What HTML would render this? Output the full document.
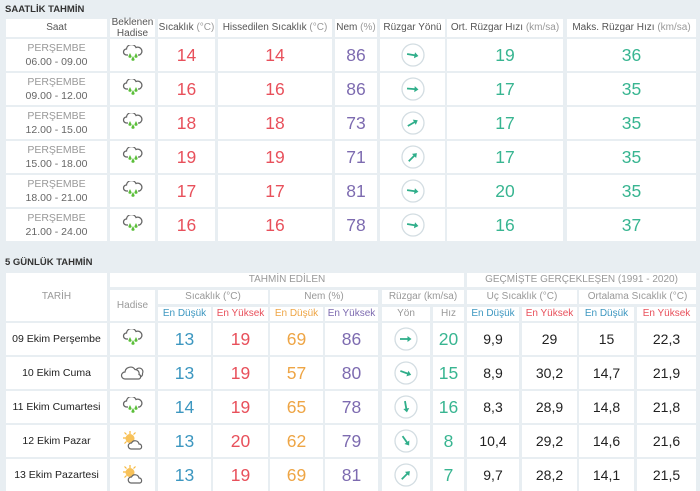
<!DOCTYPE html>
<html><head><meta charset="utf-8"><style>
body{margin:0;width:700px;height:485px;background:#e8eef2;font-family:"Liberation Sans",sans-serif;position:relative;overflow:hidden}
.c{position:absolute;background:#fff;display:flex;align-items:center;justify-content:center;text-align:center;color:#666;font-size:10px;line-height:12px;white-space:nowrap}
.t{position:absolute;font-size:9.5px;font-weight:bold;color:#333;left:5px}
.h{color:#555;font-size:10px}.u{color:#999}
.n{font-size:17.5px}
.r{color:#e8505b}.p{color:#7d6bb0}.g{color:#38b591}.b{color:#3d97c0}.o{color:#eea545}.k{color:#222;font-size:14px}
.s{font-size:10.5px;line-height:14px;color:#666}.s span{color:#999}
.d{font-size:10.5px;color:#222}
</style></head><body>
<div class="t" style="top:4px">SAATLİK TAHMİN</div>
<div class="c h" style="left:6px;top:19px;width:101px;height:18px">Saat</div>
<div class="c h" style="left:110px;top:19px;width:45px;height:18px;line-height:11px">Beklenen<br>Hadise</div>
<div class="c h" style="left:158px;top:19px;width:57px;height:18px">Sıcaklık&nbsp;<span class="u">(°C)</span></div>
<div class="c h" style="left:218px;top:19px;width:114px;height:18px">Hissedilen Sıcaklık&nbsp;<span class="u">(°C)</span></div>
<div class="c h" style="left:335px;top:19px;width:42px;height:18px">Nem&nbsp;<span class="u">(%)</span></div>
<div class="c h" style="left:380px;top:19px;width:65px;height:18px">Rüzgar Yönü</div>
<div class="c h" style="left:447px;top:19px;width:116px;height:18px">Ort. Rüzgar Hızı&nbsp;<span class="u">(km/sa)</span></div>
<div class="c h" style="left:567px;top:19px;width:129px;height:18px">Maks. Rüzgar Hızı&nbsp;<span class="u">(km/sa)</span></div>

<!-- top rows -->
<div class="c s" style="left:6px;top:39px;width:101px;height:32px"><div><span>PERŞEMBE</span><br>06.00 - 09.00</div></div>
<div class="c" style="left:110px;top:39px;width:45px;height:32px"><svg width="24" height="20" viewBox="0 0 24 20"><path d="M7 10H5.5a3 3 0 0 1 0-6A5 5 0 0 1 15 2.5a3.8 3.8 0 0 1 3.5 7.5H17" fill="none" stroke="#666" stroke-width="1.3"/><path d="M9 8l-1.6 3.2a1.6 1.6 0 0 0 3.2 0zM12 11l-1.6 3.2a1.6 1.6 0 0 0 3.2 0zM15 8l-1.6 3.2a1.6 1.6 0 0 0 3.2 0z" fill="#5bbf3a"/></svg></div>
<div class="c n r" style="left:158px;top:39px;width:57px;height:32px">14</div>
<div class="c n r" style="left:218px;top:39px;width:114px;height:32px">14</div>
<div class="c n p" style="left:335px;top:39px;width:42px;height:32px">86</div>
<div class="c" style="left:380px;top:39px;width:65px;height:32px"><svg width="24" height="24"><circle cx="12" cy="12" r="11" fill="none" stroke="#d3dde2" stroke-width="1.3"/><g transform="rotate(10 12 12)"><path d="M6 12h9" stroke="#2fae8a" stroke-width="1.8"/><path d="M17.5 12l-4-3v6z" fill="#2fae8a"/></g></svg></div>
<div class="c n g" style="left:447px;top:39px;width:116px;height:32px">19</div>
<div class="c n g" style="left:567px;top:39px;width:129px;height:32px">36</div>

<div class="c s" style="left:6px;top:73px;width:101px;height:32px"><div><span>PERŞEMBE</span><br>09.00 - 12.00</div></div>
<div class="c" style="left:110px;top:73px;width:45px;height:32px"><svg width="24" height="20" viewBox="0 0 24 20"><path d="M7 10H5.5a3 3 0 0 1 0-6A5 5 0 0 1 15 2.5a3.8 3.8 0 0 1 3.5 7.5H17" fill="none" stroke="#666" stroke-width="1.3"/><path d="M9 8l-1.6 3.2a1.6 1.6 0 0 0 3.2 0zM12 11l-1.6 3.2a1.6 1.6 0 0 0 3.2 0zM15 8l-1.6 3.2a1.6 1.6 0 0 0 3.2 0z" fill="#5bbf3a"/></svg></div>
<div class="c n r" style="left:158px;top:73px;width:57px;height:32px">16</div>
<div class="c n r" style="left:218px;top:73px;width:114px;height:32px">16</div>
<div class="c n p" style="left:335px;top:73px;width:42px;height:32px">86</div>
<div class="c" style="left:380px;top:73px;width:65px;height:32px"><svg width="24" height="24"><circle cx="12" cy="12" r="11" fill="none" stroke="#d3dde2" stroke-width="1.3"/><g transform="rotate(5 12 12)"><path d="M6 12h9" stroke="#2fae8a" stroke-width="1.8"/><path d="M17.5 12l-4-3v6z" fill="#2fae8a"/></g></svg></div>
<div class="c n g" style="left:447px;top:73px;width:116px;height:32px">17</div>
<div class="c n g" style="left:567px;top:73px;width:129px;height:32px">35</div>

<div class="c s" style="left:6px;top:107px;width:101px;height:32px"><div><span>PERŞEMBE</span><br>12.00 - 15.00</div></div>
<div class="c" style="left:110px;top:107px;width:45px;height:32px"><svg width="24" height="20" viewBox="0 0 24 20"><path d="M7 10H5.5a3 3 0 0 1 0-6A5 5 0 0 1 15 2.5a3.8 3.8 0 0 1 3.5 7.5H17" fill="none" stroke="#666" stroke-width="1.3"/><path d="M9 8l-1.6 3.2a1.6 1.6 0 0 0 3.2 0zM12 11l-1.6 3.2a1.6 1.6 0 0 0 3.2 0zM15 8l-1.6 3.2a1.6 1.6 0 0 0 3.2 0z" fill="#5bbf3a"/></svg></div>
<div class="c n r" style="left:158px;top:107px;width:57px;height:32px">18</div>
<div class="c n r" style="left:218px;top:107px;width:114px;height:32px">18</div>
<div class="c n p" style="left:335px;top:107px;width:42px;height:32px">73</div>
<div class="c" style="left:380px;top:107px;width:65px;height:32px"><svg width="24" height="24"><circle cx="12" cy="12" r="11" fill="none" stroke="#d3dde2" stroke-width="1.3"/><g transform="rotate(-30 12 12)"><path d="M6 12h9" stroke="#2fae8a" stroke-width="1.8"/><path d="M17.5 12l-4-3v6z" fill="#2fae8a"/></g></svg></div>
<div class="c n g" style="left:447px;top:107px;width:116px;height:32px">17</div>
<div class="c n g" style="left:567px;top:107px;width:129px;height:32px">35</div>

<div class="c s" style="left:6px;top:141px;width:101px;height:32px"><div><span>PERŞEMBE</span><br>15.00 - 18.00</div></div>
<div class="c" style="left:110px;top:141px;width:45px;height:32px"><svg width="24" height="20" viewBox="0 0 24 20"><path d="M7 10H5.5a3 3 0 0 1 0-6A5 5 0 0 1 15 2.5a3.8 3.8 0 0 1 3.5 7.5H17" fill="none" stroke="#666" stroke-width="1.3"/><path d="M9 8l-1.6 3.2a1.6 1.6 0 0 0 3.2 0zM12 11l-1.6 3.2a1.6 1.6 0 0 0 3.2 0zM15 8l-1.6 3.2a1.6 1.6 0 0 0 3.2 0z" fill="#5bbf3a"/></svg></div>
<div class="c n r" style="left:158px;top:141px;width:57px;height:32px">19</div>
<div class="c n r" style="left:218px;top:141px;width:114px;height:32px">19</div>
<div class="c n p" style="left:335px;top:141px;width:42px;height:32px">71</div>
<div class="c" style="left:380px;top:141px;width:65px;height:32px"><svg width="24" height="24"><circle cx="12" cy="12" r="11" fill="none" stroke="#d3dde2" stroke-width="1.3"/><g transform="rotate(-45 12 12)"><path d="M6 12h9" stroke="#2fae8a" stroke-width="1.8"/><path d="M17.5 12l-4-3v6z" fill="#2fae8a"/></g></svg></div>
<div class="c n g" style="left:447px;top:141px;width:116px;height:32px">17</div>
<div class="c n g" style="left:567px;top:141px;width:129px;height:32px">35</div>

<div class="c s" style="left:6px;top:175px;width:101px;height:32px"><div><span>PERŞEMBE</span><br>18.00 - 21.00</div></div>
<div class="c" style="left:110px;top:175px;width:45px;height:32px"><svg width="24" height="20" viewBox="0 0 24 20"><path d="M7 10H5.5a3 3 0 0 1 0-6A5 5 0 0 1 15 2.5a3.8 3.8 0 0 1 3.5 7.5H17" fill="none" stroke="#666" stroke-width="1.3"/><path d="M9 8l-1.6 3.2a1.6 1.6 0 0 0 3.2 0zM12 11l-1.6 3.2a1.6 1.6 0 0 0 3.2 0zM15 8l-1.6 3.2a1.6 1.6 0 0 0 3.2 0z" fill="#5bbf3a"/></svg></div>
<div class="c n r" style="left:158px;top:175px;width:57px;height:32px">17</div>
<div class="c n r" style="left:218px;top:175px;width:114px;height:32px">17</div>
<div class="c n p" style="left:335px;top:175px;width:42px;height:32px">81</div>
<div class="c" style="left:380px;top:175px;width:65px;height:32px"><svg width="24" height="24"><circle cx="12" cy="12" r="11" fill="none" stroke="#d3dde2" stroke-width="1.3"/><g transform="rotate(8 12 12)"><path d="M6 12h9" stroke="#2fae8a" stroke-width="1.8"/><path d="M17.5 12l-4-3v6z" fill="#2fae8a"/></g></svg></div>
<div class="c n g" style="left:447px;top:175px;width:116px;height:32px">20</div>
<div class="c n g" style="left:567px;top:175px;width:129px;height:32px">35</div>

<div class="c s" style="left:6px;top:209px;width:101px;height:32px"><div><span>PERŞEMBE</span><br>21.00 - 24.00</div></div>
<div class="c" style="left:110px;top:209px;width:45px;height:32px"><svg width="24" height="20" viewBox="0 0 24 20"><path d="M7 10H5.5a3 3 0 0 1 0-6A5 5 0 0 1 15 2.5a3.8 3.8 0 0 1 3.5 7.5H17" fill="none" stroke="#666" stroke-width="1.3"/><path d="M9 8l-1.6 3.2a1.6 1.6 0 0 0 3.2 0zM12 11l-1.6 3.2a1.6 1.6 0 0 0 3.2 0zM15 8l-1.6 3.2a1.6 1.6 0 0 0 3.2 0z" fill="#5bbf3a"/></svg></div>
<div class="c n r" style="left:158px;top:209px;width:57px;height:32px">16</div>
<div class="c n r" style="left:218px;top:209px;width:114px;height:32px">16</div>
<div class="c n p" style="left:335px;top:209px;width:42px;height:32px">78</div>
<div class="c" style="left:380px;top:209px;width:65px;height:32px"><svg width="24" height="24"><circle cx="12" cy="12" r="11" fill="none" stroke="#d3dde2" stroke-width="1.3"/><g transform="rotate(10 12 12)"><path d="M6 12h9" stroke="#2fae8a" stroke-width="1.8"/><path d="M17.5 12l-4-3v6z" fill="#2fae8a"/></g></svg></div>
<div class="c n g" style="left:447px;top:209px;width:116px;height:32px">16</div>
<div class="c n g" style="left:567px;top:209px;width:129px;height:32px">37</div>

<!-- 5 day -->
<div class="t" style="top:257px">5 GÜNLÜK TAHMİN</div>
<div class="c u" style="left:6px;top:273px;width:101px;height:48px">TARİH</div>
<div class="c u" style="left:110px;top:273px;width:354px;height:14px">TAHMİN EDİLEN</div>
<div class="c u" style="left:467px;top:273px;width:229px;height:14px">GEÇMİŞTE GERÇEKLEŞEN (1991 - 2020)</div>
<div class="c u" style="left:110px;top:290px;width:45px;height:31px">Hadise</div>
<div class="c u" style="left:158px;top:290px;width:110px;height:14px">Sıcaklık (°C)</div>
<div class="c u" style="left:270px;top:290px;width:108px;height:14px">Nem (%)</div>
<div class="c u" style="left:382px;top:290px;width:82px;height:14px">Rüzgar (km/sa)</div>
<div class="c u" style="left:467px;top:290px;width:110px;height:14px">Uç Sıcaklık (°C)</div>
<div class="c u" style="left:579px;top:290px;width:117px;height:14px">Ortalama Sıcaklık (°C)</div>
<div class="c b" style="left:158px;top:307px;width:53px;height:14px">En Düşük</div>
<div class="c r" style="left:213px;top:307px;width:55px;height:14px">En Yüksek</div>
<div class="c o" style="left:270px;top:307px;width:53px;height:14px">En Düşük</div>
<div class="c p" style="left:325px;top:307px;width:53px;height:14px">En Yüksek</div>
<div class="c u" style="left:382px;top:307px;width:48px;height:14px">Yön</div>
<div class="c u" style="left:433px;top:307px;width:31px;height:14px">Hız</div>
<div class="c b" style="left:467px;top:307px;width:52px;height:14px">En Düşük</div>
<div class="c r" style="left:522px;top:307px;width:55px;height:14px">En Yüksek</div>
<div class="c b" style="left:579px;top:307px;width:55px;height:14px">En Düşük</div>
<div class="c r" style="left:637px;top:307px;width:59px;height:14px">En Yüksek</div>

<!-- row 1 -->
<div class="c d" style="left:6px;top:323px;width:101px;height:32px">09 Ekim Perşembe</div>
<div class="c" style="left:110px;top:323px;width:45px;height:32px"><svg width="24" height="20" viewBox="0 0 24 20"><path d="M7 10H5.5a3 3 0 0 1 0-6A5 5 0 0 1 15 2.5a3.8 3.8 0 0 1 3.5 7.5H17" fill="none" stroke="#666" stroke-width="1.3"/><path d="M9 8l-1.6 3.2a1.6 1.6 0 0 0 3.2 0zM12 11l-1.6 3.2a1.6 1.6 0 0 0 3.2 0zM15 8l-1.6 3.2a1.6 1.6 0 0 0 3.2 0z" fill="#5bbf3a"/></svg></div>
<div class="c n b" style="left:158px;top:323px;width:53px;height:32px">13</div>
<div class="c n r" style="left:213px;top:323px;width:55px;height:32px">19</div>
<div class="c n o" style="left:270px;top:323px;width:53px;height:32px">69</div>
<div class="c n p" style="left:325px;top:323px;width:53px;height:32px">86</div>
<div class="c" style="left:382px;top:323px;width:48px;height:32px"><svg width="24" height="24"><circle cx="12" cy="12" r="11" fill="none" stroke="#d3dde2" stroke-width="1.3"/><g transform="rotate(0 12 12)"><path d="M6 12h9" stroke="#2fae8a" stroke-width="1.8"/><path d="M17.5 12l-4-3v6z" fill="#2fae8a"/></g></svg></div>
<div class="c n g" style="left:433px;top:323px;width:31px;height:32px">20</div>
<div class="c k" style="left:467px;top:323px;width:52px;height:32px">9,9</div>
<div class="c k" style="left:522px;top:323px;width:55px;height:32px">29</div>
<div class="c k" style="left:579px;top:323px;width:55px;height:32px">15</div>
<div class="c k" style="left:637px;top:323px;width:59px;height:32px">22,3</div>

<!-- row 2 -->
<div class="c d" style="left:6px;top:357px;width:101px;height:32px">10 Ekim Cuma</div>
<div class="c" style="left:110px;top:357px;width:45px;height:32px"><svg width="28" height="18" viewBox="0 0 28 18"><path d="M6 15a3.5 3.5 0 0 1 0-7 5.5 5.5 0 0 1 10-2.5 4 4 0 0 1 4 5A2.3 2.3 0 0 1 19.5 15z" fill="#fff" stroke="#666" stroke-width="1.2"/><path d="M17 6a3.5 3.5 0 0 1 6.5 3.5A3 3 0 0 1 21 13" fill="none" stroke="#666" stroke-width="1.2"/></svg></div>
<div class="c n b" style="left:158px;top:357px;width:53px;height:32px">13</div>
<div class="c n r" style="left:213px;top:357px;width:55px;height:32px">19</div>
<div class="c n o" style="left:270px;top:357px;width:53px;height:32px">57</div>
<div class="c n p" style="left:325px;top:357px;width:53px;height:32px">80</div>
<div class="c" style="left:382px;top:357px;width:48px;height:32px"><svg width="24" height="24"><circle cx="12" cy="12" r="11" fill="none" stroke="#d3dde2" stroke-width="1.3"/><g transform="rotate(20 12 12)"><path d="M6 12h9" stroke="#2fae8a" stroke-width="1.8"/><path d="M17.5 12l-4-3v6z" fill="#2fae8a"/></g></svg></div>
<div class="c n g" style="left:433px;top:357px;width:31px;height:32px">15</div>
<div class="c k" style="left:467px;top:357px;width:52px;height:32px">8,9</div>
<div class="c k" style="left:522px;top:357px;width:55px;height:32px">30,2</div>
<div class="c k" style="left:579px;top:357px;width:55px;height:32px">14,7</div>
<div class="c k" style="left:637px;top:357px;width:59px;height:32px">21,9</div>

<!-- row 3 -->
<div class="c d" style="left:6px;top:391px;width:101px;height:32px">11 Ekim Cumartesi</div>
<div class="c" style="left:110px;top:391px;width:45px;height:32px"><svg width="24" height="20" viewBox="0 0 24 20"><path d="M7 10H5.5a3 3 0 0 1 0-6A5 5 0 0 1 15 2.5a3.8 3.8 0 0 1 3.5 7.5H17" fill="none" stroke="#666" stroke-width="1.3"/><path d="M9 8l-1.6 3.2a1.6 1.6 0 0 0 3.2 0zM12 11l-1.6 3.2a1.6 1.6 0 0 0 3.2 0zM15 8l-1.6 3.2a1.6 1.6 0 0 0 3.2 0z" fill="#5bbf3a"/></svg></div>
<div class="c n b" style="left:158px;top:391px;width:53px;height:32px">14</div>
<div class="c n r" style="left:213px;top:391px;width:55px;height:32px">19</div>
<div class="c n o" style="left:270px;top:391px;width:53px;height:32px">65</div>
<div class="c n p" style="left:325px;top:391px;width:53px;height:32px">78</div>
<div class="c" style="left:382px;top:391px;width:48px;height:32px"><svg width="24" height="24"><circle cx="12" cy="12" r="11" fill="none" stroke="#d3dde2" stroke-width="1.3"/><g transform="rotate(80 12 12)"><path d="M6 12h9" stroke="#2fae8a" stroke-width="1.8"/><path d="M17.5 12l-4-3v6z" fill="#2fae8a"/></g></svg></div>
<div class="c n g" style="left:433px;top:391px;width:31px;height:32px">16</div>
<div class="c k" style="left:467px;top:391px;width:52px;height:32px">8,3</div>
<div class="c k" style="left:522px;top:391px;width:55px;height:32px">28,9</div>
<div class="c k" style="left:579px;top:391px;width:55px;height:32px">14,8</div>
<div class="c k" style="left:637px;top:391px;width:59px;height:32px">21,8</div>

<!-- row 4 -->
<div class="c d" style="left:6px;top:425px;width:101px;height:32px">12 Ekim Pazar</div>
<div class="c" style="left:110px;top:425px;width:45px;height:32px"><svg width="24" height="22" viewBox="0 0 24 22"><g stroke="#f6b73c" stroke-width="1.2"><path d="M9 1v3M2 8h3M3.5 2.5l2 2M14.5 2.5l-2 2M3.5 13.5l2-2"/></g><circle cx="9" cy="8.5" r="4.5" fill="#f8c25a"/><path d="M10 19a3 3 0 0 1 .5-6 4 4 0 0 1 7.5 1 2.6 2.6 0 0 1 1 5z" fill="#fff" stroke="#666" stroke-width="1.2"/></svg></div>
<div class="c n b" style="left:158px;top:425px;width:53px;height:32px">13</div>
<div class="c n r" style="left:213px;top:425px;width:55px;height:32px">20</div>
<div class="c n o" style="left:270px;top:425px;width:53px;height:32px">62</div>
<div class="c n p" style="left:325px;top:425px;width:53px;height:32px">79</div>
<div class="c" style="left:382px;top:425px;width:48px;height:32px"><svg width="24" height="24"><circle cx="12" cy="12" r="11" fill="none" stroke="#d3dde2" stroke-width="1.3"/><g transform="rotate(55 12 12)"><path d="M6 12h9" stroke="#2fae8a" stroke-width="1.8"/><path d="M17.5 12l-4-3v6z" fill="#2fae8a"/></g></svg></div>
<div class="c n g" style="left:433px;top:425px;width:31px;height:32px">8</div>
<div class="c k" style="left:467px;top:425px;width:52px;height:32px">10,4</div>
<div class="c k" style="left:522px;top:425px;width:55px;height:32px">29,2</div>
<div class="c k" style="left:579px;top:425px;width:55px;height:32px">14,6</div>
<div class="c k" style="left:637px;top:425px;width:59px;height:32px">21,6</div>

<!-- row 5 -->
<div class="c d" style="left:6px;top:459px;width:101px;height:32px">13 Ekim Pazartesi</div>
<div class="c" style="left:110px;top:459px;width:45px;height:32px"><svg width="24" height="22" viewBox="0 0 24 22"><g stroke="#f6b73c" stroke-width="1.2"><path d="M9 1v3M2 8h3M3.5 2.5l2 2M14.5 2.5l-2 2M3.5 13.5l2-2"/></g><circle cx="9" cy="8.5" r="4.5" fill="#f8c25a"/><path d="M10 19a3 3 0 0 1 .5-6 4 4 0 0 1 7.5 1 2.6 2.6 0 0 1 1 5z" fill="#fff" stroke="#666" stroke-width="1.2"/></svg></div>
<div class="c n b" style="left:158px;top:459px;width:53px;height:32px">13</div>
<div class="c n r" style="left:213px;top:459px;width:55px;height:32px">19</div>
<div class="c n o" style="left:270px;top:459px;width:53px;height:32px">69</div>
<div class="c n p" style="left:325px;top:459px;width:53px;height:32px">81</div>
<div class="c" style="left:382px;top:459px;width:48px;height:32px"><svg width="24" height="24"><circle cx="12" cy="12" r="11" fill="none" stroke="#d3dde2" stroke-width="1.3"/><g transform="rotate(-45 12 12)"><path d="M6 12h9" stroke="#2fae8a" stroke-width="1.8"/><path d="M17.5 12l-4-3v6z" fill="#2fae8a"/></g></svg></div>
<div class="c n g" style="left:433px;top:459px;width:31px;height:32px">7</div>
<div class="c k" style="left:467px;top:459px;width:52px;height:32px">9,7</div>
<div class="c k" style="left:522px;top:459px;width:55px;height:32px">28,2</div>
<div class="c k" style="left:579px;top:459px;width:55px;height:32px">14,1</div>
<div class="c k" style="left:637px;top:459px;width:59px;height:32px">21,5</div>
</body></html>
